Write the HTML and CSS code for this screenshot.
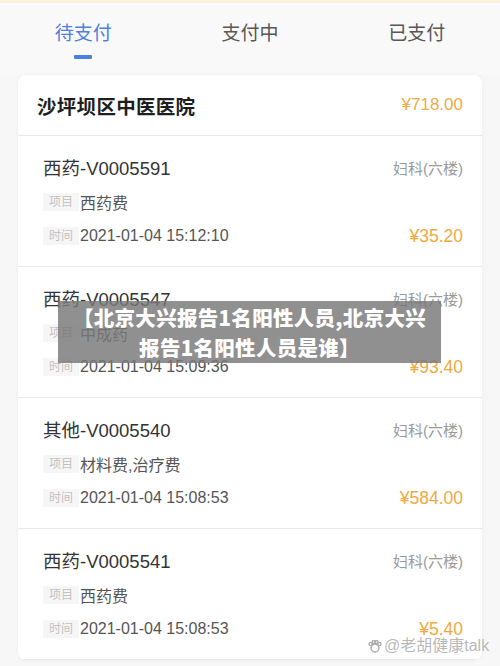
FILE: index.html
```html
<!DOCTYPE html>
<html lang="zh">
<head>
<meta charset="utf-8">
<link rel="stylesheet" href="styles.css">
</head>
<body>
<div class="topbar"></div>
<nav class="tabs">
  <div class="tab active"><span>待支付</span><i class="bar"></i></div>
  <div class="tab"><span>支付中</span></div>
  <div class="tab"><span>已支付</span></div>
</nav>
<section class="card">
  <div class="head">
    <span class="hosp">沙坪坝区中医医院</span>
    <span class="amount">¥718.00</span>
  </div>
  <div class="item">
    <div class="row"><span class="title">西药-V0005591</span><span class="dept">妇科(六楼)</span></div>
    <div class="row r2"><span class="tag">项目</span><span class="val">西药费</span></div>
    <div class="row r3"><span class="tag">时间</span><span class="val">2021-01-04 15:12:10</span><span class="price">¥35.20</span></div>
  </div>
  <div class="item">
    <div class="row"><span class="title">西药-V0005547</span><span class="dept">妇科(六楼)</span></div>
    <div class="row r2"><span class="tag">项目</span><span class="val">中成药</span></div>
    <div class="row r3"><span class="tag">时间</span><span class="val">2021-01-04 15:09:36</span><span class="price">¥93.40</span></div>
  </div>
  <div class="item">
    <div class="row"><span class="title">其他-V0005540</span><span class="dept">妇科(六楼)</span></div>
    <div class="row r2"><span class="tag">项目</span><span class="val">材料费,治疗费</span></div>
    <div class="row r3"><span class="tag">时间</span><span class="val">2021-01-04 15:08:53</span><span class="price">¥584.00</span></div>
  </div>
  <div class="item">
    <div class="row"><span class="title">西药-V0005541</span><span class="dept">妇科(六楼)</span></div>
    <div class="row r2"><span class="tag">项目</span><span class="val">西药费</span></div>
    <div class="row r3"><span class="tag">时间</span><span class="val">2021-01-04 15:08:53</span><span class="price">¥5.40</span></div>
  </div>
</section>
<div class="caption">【北京大兴报告1名阳性人员,北京大兴<br>报告1名阳性人员是谁】</div>
<div class="mark">
  <svg width="14" height="13" viewBox="0 0 14 13"><g fill="none" stroke="#a8a8a8" stroke-width="1.3"><circle cx="7" cy="8" r="4"/><circle cx="2.6" cy="4" r="1.6"/><circle cx="5.6" cy="2" r="1.5"/><circle cx="8.6" cy="2" r="1.5"/><circle cx="11.4" cy="4" r="1.6"/></g></svg>
  <span>@老胡健康talk</span>
</div>
</body>
</html>
```
FILE: styles.css
```css
* { box-sizing: border-box; }
html, body { margin: 0; padding: 0; }
body {
  width: 500px;
  height: 666px;
  overflow: hidden;
  background: #f7f7f7;
  font-family: "Liberation Sans", "Noto Sans CJK SC", sans-serif;
  position: relative;
}
.topbar { height: 3px; background: #fcefdb; }
.tabs {
  display: grid;
  grid-template-columns: 1fr 1fr 1fr;
  padding-top: 18px;
  height: 72px;
  background: #f9f9f9;
}
.tab {
  display: flex;
  flex-direction: column;
  align-items: center;
  font-size: 19px;
  line-height: 26px;
  color: #575757;
}
.tab.active { color: #4d7fe0; }
.bar {
  display: block;
  width: 18px;
  height: 4px;
  margin-top: 8px;
  background: #4d7fe0;
  border-radius: 1px;
}
.card {
  margin: 0 18px;
  background: #fff;
  border-radius: 8px;
  box-shadow: 0 0 4px rgba(0,0,0,0.05);
  overflow: hidden;
}
.head {
  height: 61px;
  display: flex;
  align-items: center;
  justify-content: space-between;
  padding: 0 19px 0 19px;
  border-bottom: 1px solid #e9e9e9;
}
.hosp { font-size: 19.5px; font-weight: 700; color: #1e1e1e; letter-spacing: 0.3px; }
.amount { font-size: 17px; color: #efab45; }
.item {
  padding: 18px 19px 18px 25px;
  border-bottom: 1px solid #e9e9e9;
}
.row {
  display: flex;
  align-items: center;
  height: 26px;
}
.r2 { margin-top: 10px; height: 24px; }
.r3 { margin-top: 10px; height: 24px; }
.title { font-size: 18.5px; color: #333; flex: 1; }
.dept { font-size: 15px; color: #9a9a9a; }
.tag {
  width: 36px;
  height: 18px;
  line-height: 18px;
  background: #f6f6f6;
  color: #c2c2c2;
  font-size: 12px;
  text-align: center;
  margin-right: 1px;
}
.val { font-size: 16px; color: #555; flex: 1; }
.price { font-size: 17.5px; color: #f0a940; }
.caption {
  position: absolute;
  left: 58px;
  top: 301px;
  width: 383px;
  height: 62px;
  padding-top: 1px;
  background: rgba(120,120,120,0.82);
  color: #fff;
  font-family: "Noto Sans CJK SC", sans-serif;
  font-size: 20.5px;
  font-weight: 900;
  line-height: 30px;
  letter-spacing: 0.3px;
  text-align: center;
}
.mark {
  position: absolute;
  left: 368px;
  top: 636px;
  display: flex;
  align-items: center;
  gap: 2px;
  color: rgba(160,160,160,0.75);
  font-size: 16px;
  line-height: 20px;
  text-shadow: 0 0 1px #fff, 0 0 1px #fff;
}
```
